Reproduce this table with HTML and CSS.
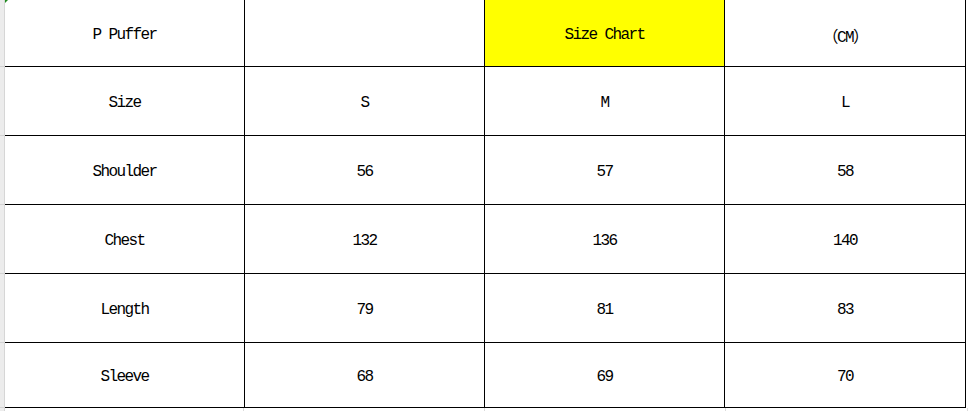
FILE: index.html
```html
<!DOCTYPE html>
<html>
<head>
<meta charset="utf-8">
<link rel="stylesheet" href="styles.css">
</head>
<body>
<div class="sheet">
  <div class="gutter">
    <div></div><div></div><div></div><div></div><div></div><div></div><div></div>
  </div>
  <div class="area">
    <span class="handle"></span>
    <div class="chart">
      <div class="cell">P Puffer</div>
      <div class="cell"></div>
      <div class="cell hl">Size Chart</div>
      <div class="cell">（CM）</div>

      <div class="cell">Size</div>
      <div class="cell">S</div>
      <div class="cell">M</div>
      <div class="cell">L</div>

      <div class="cell">Shoulder</div>
      <div class="cell">56</div>
      <div class="cell">57</div>
      <div class="cell">58</div>

      <div class="cell">Chest</div>
      <div class="cell">132</div>
      <div class="cell">136</div>
      <div class="cell">140</div>

      <div class="cell">Length</div>
      <div class="cell">79</div>
      <div class="cell">81</div>
      <div class="cell">83</div>

      <div class="cell">Sleeve</div>
      <div class="cell">68</div>
      <div class="cell">69</div>
      <div class="cell">70</div>
    </div>
    <div class="filler">
      <div></div><div></div><div></div><div></div><div></div>
    </div>
  </div>
</div>
</body>
</html>
```

FILE: styles.css
```css
html, body {
  margin: 0;
  padding: 0;
  background: #ffffff;
}

.sheet {
  display: flex;
  width: 968px;
  height: 411px;
  overflow: hidden;
}

.gutter {
  width: 4px;
  flex: none;
  display: grid;
  grid-template-rows: 66px 68px 68px 68px 68px 64px 10px;
  row-gap: 1px;
  background: #d2d2d2;
  border-right: 1px solid #d6d6d6;
}

.gutter div {
  background: #ececec;
}

.area {
  position: relative;
  flex: 1;
}

.handle {
  position: absolute;
  left: 0;
  top: 0;
  width: 0;
  height: 0;
  border-top: 3px solid #1f8a1f;
  border-right: 3px solid transparent;
}

.chart {
  display: grid;
  grid-template-columns: 239px 239px 239px 240px;
  grid-template-rows: 66px 68px 68px 68px 68px 64px;
  gap: 1px;
  width: 960px;
  background: #000000;
  border-right: 1px solid #000000;
  border-bottom: 1px solid #000000;
}

.cell {
  background: #ffffff;
  display: flex;
  align-items: center;
  justify-content: center;
  padding-top: 3px;
  font-family: "Liberation Mono", "Noto Sans CJK SC", monospace;
  font-size: 16px;
  letter-spacing: -1.6px;
  color: #000000;
  white-space: nowrap;
}

.cell.hl {
  background: #ffff00;
}

.filler {
  display: grid;
  grid-template-columns: 238px 240px 240px 241px 10px;
  column-gap: 1px;
  height: 4px;
  background: #dcdcdc;
}

.filler div {
  background: #ffffff;
}
```
